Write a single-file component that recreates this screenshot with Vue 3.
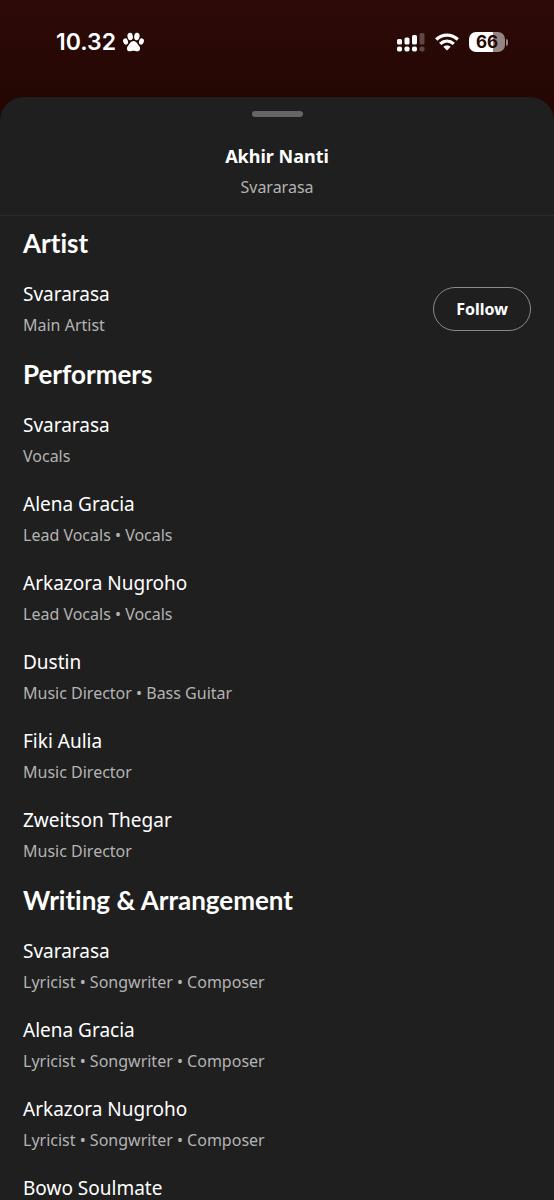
<script setup>
const sections = [
  { title: 'Artist', people: [{ name: 'Svararasa', role: 'Main Artist', follow: true }] },
  {
    title: 'Performers',
    people: [
      { name: 'Svararasa', role: 'Vocals' },
      { name: 'Alena Gracia', role: 'Lead Vocals • Vocals' },
      { name: 'Arkazora Nugroho', role: 'Lead Vocals • Vocals' },
      { name: 'Dustin', role: 'Music Director • Bass Guitar' },
      { name: 'Fiki Aulia', role: 'Music Director' },
      { name: 'Zweitson Thegar', role: 'Music Director' },
    ],
  },
  {
    title: 'Writing & Arrangement',
    people: [
      { name: 'Svararasa', role: 'Lyricist • Songwriter • Composer' },
      { name: 'Alena Gracia', role: 'Lyricist • Songwriter • Composer' },
      { name: 'Arkazora Nugroho', role: 'Lyricist • Songwriter • Composer' },
      { name: 'Bowo Soulmate' },
    ],
  },
]
</script>

<template>
  <div class="screen">
    <div class="status">
      <div class="time">
        <span>10.32</span>
        <svg width="21" height="20" viewBox="0 0 22 20" fill="#fff">
          <ellipse cx="7.5" cy="4.2" rx="2.8" ry="4" transform="rotate(-8 7.5 4.2)" />
          <ellipse cx="14.5" cy="4.2" rx="2.8" ry="4" transform="rotate(8 14.5 4.2)" />
          <ellipse cx="2.7" cy="9.5" rx="2.5" ry="3.4" transform="rotate(-18 2.7 9.5)" />
          <ellipse cx="19.3" cy="9.5" rx="2.5" ry="3.4" transform="rotate(18 19.3 9.5)" />
          <path d="M11 9C8 9 7.2 12 5.5 13.6C3 16 4 19.8 7 19.8C8.700 19.8 9.400 19.2 11 19.2S13.300 19.8 15 19.8C18 19.8 19 16 16.5 13.6C14.8 12 14 9 11 9Z" />
        </svg>
      </div>
      <div class="indicators">
        <svg width="28" height="20" viewBox="0 0 28 20" fill="#fff">
          <rect x="0" y="7" width="5" height="5.5" rx="1.5" /><rect x="0" y="14.5" width="5" height="5" rx="1.8" />
          <rect x="7.5" y="5.5" width="5" height="7" rx="1.5" /><rect x="7.5" y="14.5" width="5" height="5" rx="1.8" />
          <rect x="15" y="3" width="5" height="9.5" rx="1.5" /><rect x="15" y="14.5" width="5" height="5" rx="1.8" />
          <g opacity=".25"><rect x="22.5" y="1" width="5" height="11.5" rx="1.5" /><rect x="22.5" y="14.5" width="5" height="5" rx="1.8" /></g>
        </svg>
        <svg width="24" height="18" viewBox="0 0 24 18" fill="none" stroke="#fff" stroke-width="3.3">
          <path d="M1.2 6.500C7.500 .7 16.500 .7 22.800 6.500M5.200 10.900C9.300 7.200 14.700 7.200 18.800 10.900" />
          <path d="M12 17.500L8.300 13.800C10.400 12 13.600 12 15.700 13.800Z" fill="#fff" stroke="none" />
        </svg>
        <div class="battery"><span class="cell">66</span><span class="tip"></span></div>
      </div>
    </div>
    <main class="sheet">
      <header class="head">
        <div class="grabber"></div>
        <h1>Akhir Nanti</h1>
        <p>Svararasa</p>
      </header>
      <section v-for="section in sections" :key="section.title">
        <h2>{{ section.title }}</h2>
        <div v-for="person in section.people" :key="person.name" class="row">
          <div class="credit">
            <h3>{{ person.name }}</h3>
            <p v-if="person.role">{{ person.role }}</p>
          </div>
          <button v-if="person.follow" type="button">Follow</button>
        </div>
      </section>
    </main>
  </div>
</template>

<style>
body { background: #1f1f1f; }
</style>

<style scoped>
.screen { height: 100vh; overflow: hidden; display: flex; flex-direction: column; background: linear-gradient(#2d0a08, #240703 97px); color: #fff; font-family: "Noto Sans", "Open Sans", sans-serif; }
h1, h2, h3, p { margin: 0; }
.status { height: 97px; flex: none; box-sizing: border-box; padding: 26px 46px 0 56px; display: flex; justify-content: space-between; align-items: flex-start; }
.time { display: flex; align-items: center; gap: 7px; height: 32px; font: 600 23px/32px Inter, sans-serif; }
.indicators { display: flex; align-items: center; gap: 10px; height: 32px; }
.battery { display: flex; align-items: center; gap: 1px; }
.cell { width: 36px; height: 20px; border-radius: 7px; background: linear-gradient(90deg, #fff 66%, #948482 66%); color: #260705; font: 700 17px/20px Inter, sans-serif; text-align: center; }
.tip { width: 2px; height: 7px; border-radius: 0 2px 2px 0; background: #948482; }
.sheet { flex: 1; min-height: 0; overflow: hidden; background: #1f1f1f; border-radius: 24px 24px 0 0; }
.head { height: 118px; border-bottom: 1px solid #2b2b2b; display: flex; flex-direction: column; align-items: center; }
.grabber { width: 51px; height: 6px; flex: none; border-radius: 3px; background: #656565; margin: 14px 0 24px; }
h1 { font-size: 18px; line-height: 30px; font-weight: 700; }
p { font-size: 16px; line-height: 24px; color: #b3b3b3; }
.head p { line-height: 32px; }
h2 { font: 700 26px/32px Lato, sans-serif; font-variant-ligatures: none; padding: 11px 23px 9px; }
h3 { font-size: 19px; line-height: 28px; font-weight: 400; }
.credit { display: flex; flex-direction: column; gap: 5px; }
.row { min-height: 79px; box-sizing: border-box; padding: 12px 23px 10px; display: flex; justify-content: space-between; }
button { align-self: center; width: 98px; height: 44px; border: 1px solid #8a8a8a; border-radius: 22px; background: transparent; color: #fff; font: 700 16px "Noto Sans", sans-serif; }
</style>
